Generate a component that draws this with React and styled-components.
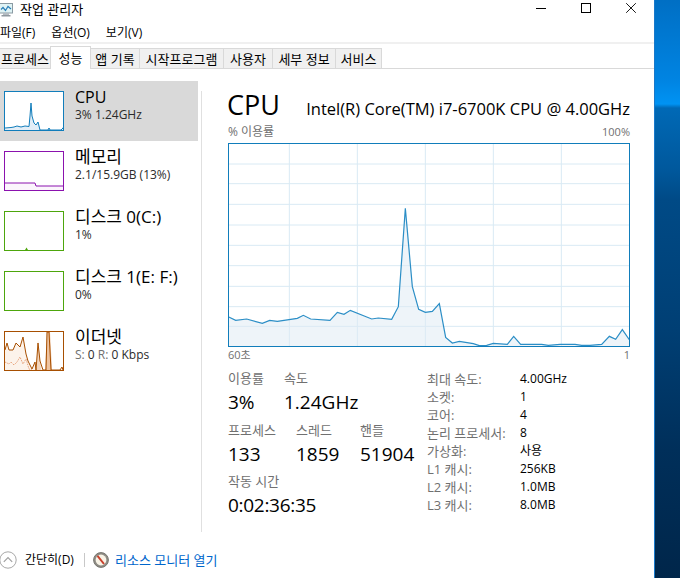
import React from "react";
import styled, { createGlobalStyle } from "styled-components";

const GlobalStyle = createGlobalStyle`
  html, body {
    margin: 0;
    padding: 0;
    background: #ffffff;
    overflow: hidden;
  }
  body {
    font-family: "Open Sans", "Noto Sans CJK KR", sans-serif;
    color: #000000;
  }
`;

const Screen = styled.div`
  display: flex;
  width: 680px;
  height: 578px;
  overflow: hidden;
`;

const Desktop = styled.div`
  flex: 1;
  background: linear-gradient(
    180deg,
    #006fc4 0,
    #0084e2 80px,
    #0093f3 104px,
    #0069b6 108px,
    #00589c 170px,
    #004a86 200px,
    #003f74 330px,
    #002f5a 450px,
    #00264a 578px
  );
`;

const Window = styled.div`
  width: 654px;
  height: 578px;
  border-right: 1px solid #1979ca;
  display: flex;
  flex-direction: column;
  background: #ffffff;
`;

const TitleBar = styled.div`
  height: 22px;
  flex-shrink: 0;
  display: flex;
  align-items: flex-start;
  justify-content: space-between;
`;

const TitleLeft = styled.div`
  display: flex;
  align-items: center;
  gap: 7px;
  font-size: 13px;
  line-height: 16px;
  height: 16px;
  margin-top: 1px;
`;

const WinButtons = styled.div`
  display: flex;
  margin-top: 3px;
  margin-right: 18px;
  gap: 35px;
  align-items: center;
`;

const MenuBar = styled.div`
  height: 18px;
  flex-shrink: 0;
  display: flex;
  gap: 16px;
  align-items: center;
  font-size: 12px;
  line-height: 16px;
  border-bottom: 2px solid #f0f0f0;
  padding-top: 2px;
`;

const TabBar = styled.div`
  height: 24px;
  flex-shrink: 0;
  display: flex;
  align-items: flex-end;
  border-bottom: 1px solid #d9d9d9;
`;

const Tab = styled.div`
  width: ${(p) => p.$w}px;
  box-sizing: border-box;
  height: ${(p) => (p.$active ? 23 : 20)}px;
  margin-bottom: ${(p) => (p.$active ? -1 : 0)}px;
  display: flex;
  align-items: center;
  justify-content: center;
  font-size: 13px;
  line-height: 16px;
  white-space: nowrap;
  background: ${(p) => (p.$active ? "#ffffff" : "#f0f0f0")};
  border: 1px solid #d9d9d9;
  border-left-width: ${(p) => (p.$first ? 0 : 1)}px;
  border-bottom-width: 0;
  margin-right: -1px;
  position: relative;
  z-index: ${(p) => (p.$active ? 1 : 0)};
`;

const Main = styled.div`
  flex: 1;
  display: flex;
  padding-top: 12px;
  min-height: 0;
`;

const Sidebar = styled.div`
  width: 198px;
  flex-shrink: 0;
  display: flex;
  flex-direction: column;
`;

const SideRow = styled.div`
  height: 60px;
  flex-shrink: 0;
  display: flex;
  align-items: center;
  padding-left: 4px;
  gap: 11px;
  background: ${(p) => (p.$selected ? "#d9d9d9" : "transparent")};
`;

const Thumb = styled.svg`
  width: 60px;
  height: 40px;
  box-sizing: border-box;
  border: 1px solid ${(p) => p.$color};
  background: #ffffff;
  flex-shrink: 0;
`;

const SideText = styled.div`
  display: flex;
  flex-direction: column;
  align-self: flex-start;
  padding-top: 6px;
`;

const SideName = styled.div`
  font-size: ${(p) => p.$size || 17}px;
  line-height: 20px;
  white-space: nowrap;
`;

const SideSub = styled.div`
  font-size: 12px;
  line-height: 16px;
  white-space: nowrap;
  color: #2b2b2b;
`;

const SubDim = styled.span`
  color: #707070;
`;

const Divider = styled.div`
  width: 1px;
  height: 441px;
  margin: 10px 0 0 3px;
  background: #e0e0e0;
  flex-shrink: 0;
`;

const Panel = styled.div`
  width: 402px;
  margin-left: 26px;
  flex-shrink: 0;
  display: flex;
  flex-direction: column;
`;

const Heading = styled.div`
  display: flex;
  align-items: baseline;
  justify-content: space-between;
  height: 34px;
  margin-top: 6px;
`;

const HeadTitle = styled.div`
  font-size: 27px;
  line-height: 36px;
  margin-left: -1px;
`;

const HeadCpu = styled.div`
  font-size: 16.5px;
  line-height: 36px;
  white-space: nowrap;
`;

const AxisRow = styled.div`
  display: flex;
  justify-content: space-between;
  font-size: 11px;
  line-height: 14px;
  color: #707070;
  height: ${(p) => p.$h}px;
  align-items: center;
`;

const AxisTitle = styled.span`
  font-size: 12px;
`;

const Chart = styled.svg`
  display: block;
  width: 402px;
  height: 204px;
  flex-shrink: 0;
  box-sizing: border-box;
  border: 1px solid #117dbb;
  background: #ffffff;
`;

const Stats = styled.div`
  display: grid;
  grid-template-columns: 199px 1fr;
  margin-top: 7px;
`;

const StatsLeft = styled.div`
  display: flex;
  flex-direction: column;
`;

const StatLine = styled.div`
  display: flex;
  height: ${(p) => p.$h}px;
`;

const Stat = styled.div`
  width: ${(p) => p.$w}px;
  flex-shrink: 0;
  display: flex;
  flex-direction: column;
  white-space: nowrap;
`;

const StatLabel = styled.div`
  font-size: 13px;
  line-height: 16px;
  color: #707070;
`;

const StatValue = styled.div`
  font-size: 19px;
  line-height: 26px;
  margin-top: 3px;
  letter-spacing: ${(p) => (p.$tight ? "-0.3px" : "0")};
`;

const Details = styled.div`
  display: grid;
  grid-template-columns: 93px 1fr;
  grid-auto-rows: 18px;
  font-size: 12px;
  line-height: 18px;
  white-space: nowrap;
`;

const DetailKey = styled.div`
  color: #707070;
  font-size: 13px;
`;

const Footer = styled.div`
  height: 32px;
  flex-shrink: 0;
  display: flex;
  align-items: center;
  font-size: 12px;
  line-height: 16px;
  margin-bottom: 2px;
`;

const FooterLabel = styled.span`
  margin-left: 8px;
  width: 59px;
  white-space: nowrap;
`;

const FooterRule = styled.div`
  width: 1px;
  height: 14px;
  background: #c8c8c8;
  margin-right: 8px;
`;

const FooterLink = styled.span`
  color: #0066cc;
  font-size: 13px;
  margin-left: 6px;
  white-space: nowrap;
`;

// chart trace, traced from the graph (viewBox units are 1/3 px)
const CPU_TRACE = [
  [24, 380], [47, 391], [80, 387], [127, 400], [149, 391], [172, 394], [232, 385],
  [250, 376], [272, 387], [330, 391], [352, 367], [372, 373], [391, 361], [455, 387],
  [475, 384], [515, 388], [535, 350], [556, 55], [577, 290], [596, 358], [616, 367],
  [637, 364], [658, 341], [677, 442], [697, 459], [718, 454], [760, 461], [778, 467],
  [800, 466], [820, 460], [862, 463], [881, 439], [902, 463], [965, 463], [985, 466],
  [1020, 463], [1065, 463], [1085, 466], [1110, 466], [1145, 463], [1168, 439],
  [1187, 448], [1207, 419], [1230, 452],
];
const H_LINES = [-78, -19, 43, 105, 166, 227, 289, 350, 409];
const V_LINES = [208, 412, 616, 820, 1024];

const pts = (list) => list.map((p) => p.join(",")).join(" ");

function CpuChart() {
  const area = pts([[24, 471], ...CPU_TRACE, [1230, 471]]);
  return (
    <Chart viewBox="27 -138 1200 606" preserveAspectRatio="none">
      {H_LINES.map((y) => (
        <line key={y} x1="0" x2="1240" y1={y} y2={y} stroke="#d9eaf4" strokeWidth="1" vectorEffect="non-scaling-stroke" />
      ))}
      {V_LINES.map((x) => (
        <line key={x} x1={x} x2={x} y1="-150" y2="480" stroke="#d9eaf4" strokeWidth="1" vectorEffect="non-scaling-stroke" />
      ))}
      <polygon points={area} fill="#deeaf4" fillOpacity="0.5" />
      <polyline points={pts(CPU_TRACE)} fill="none" stroke="#2b8ec6" strokeWidth="1.2" vectorEffect="non-scaling-stroke" />
    </Chart>
  );
}

function CpuThumb() {
  const line = [[0, 36], [6, 35.5], [9, 35], [12, 34], [16, 35], [20, 34], [24, 34.5], [25, 24], [26, 11], [27, 24], [29, 31], [31, 33], [33, 30], [35, 38], [43, 38], [44, 36], [45, 38], [56, 38], [58, 36], [60, 33]];
  return (
    <Thumb $color="#117dbb" viewBox="0 0 58 38" preserveAspectRatio="none">
      <polygon points={pts([[0, 38], ...line, [60, 38]])} fill="#d7e7f3" fillOpacity="0.7" />
      <polyline points={pts(line)} fill="none" stroke="#117dbb" strokeWidth="1" />
    </Thumb>
  );
}

function MemoryThumb() {
  const line = [[0, 31], [30, 31], [31, 34], [58, 34]];
  return (
    <Thumb $color="#8b12ae" viewBox="0 0 58 38" preserveAspectRatio="none">
      <polygon points={pts([[0, 38], ...line, [58, 38]])} fill="#fbf5fc" />
      <polyline points={pts(line)} fill="none" stroke="#8b12ae" strokeWidth="1" />
    </Thumb>
  );
}

function DiskThumb({ tick }) {
  return (
    <Thumb $color="#4da60c" viewBox="0 0 58 38" preserveAspectRatio="none">
      {tick && <polygon points="20,38 21.5,35.5 23,38" fill="#4da60c" />}
    </Thumb>
  );
}

function EthernetThumb() {
  const dark = [[0, 18], [2, 11], [4, 18], [8, 18], [11, 11], [15, 15], [18, 5], [21, 22], [23, 29], [27, 37], [30, 30], [31, 38], [33, 11], [35, 29], [38, 38], [41, 38], [42, 0], [44, 0], [46, 38], [55, 38], [57, 35], [58, 38]];
  const dotted = [[0, 30], [4, 32], [6, 30], [9, 33], [12, 30], [15, 25], [18, 32], [21, 27], [24, 37], [27, 38]];
  return (
    <Thumb $color="#a74f01" viewBox="0 0 58 38" preserveAspectRatio="none">
      <polygon points={pts([[0, 38], ...dark, [58, 38]])} fill="#fcf3eb" />
      <polygon points="31,38 33,8 36,38" fill="#f3d5bc" />
      <polygon points="40,38 42,0 45,0 47,38" fill="#eec3a0" />
      <polyline points={pts(dotted)} fill="none" stroke="#e8a27a" strokeWidth="1" strokeDasharray="1.5 1" />
      <polyline points={pts(dark)} fill="none" stroke="#a74f01" strokeWidth="1" />
    </Thumb>
  );
}

function AppIcon() {
  return (
    <svg width="14" height="14" viewBox="0 0 14 14" style={{ marginLeft: -1, marginTop: 2 }}>
      <rect x="0.5" y="0.5" width="13" height="9.5" fill="#dff3f5" stroke="#8a9aa3" />
      <polyline points="2,6.5 4,4.5 6.5,7.5 9,3.5 12,6" fill="none" stroke="#2a7fb8" strokeWidth="1.2" />
      <rect x="4" y="10" width="6" height="2" fill="#b5bcc2" />
      <rect x="2.5" y="12" width="9" height="1.5" fill="#8f989f" />
    </svg>
  );
}

function MinIcon() {
  return (
    <svg width="10" height="10" viewBox="0 0 10 10">
      <line x1="0" x2="10" y1="5.5" y2="5.5" stroke="#000" />
    </svg>
  );
}

function MaxIcon() {
  return (
    <svg width="10" height="10" viewBox="0 0 10 10">
      <rect x="0.5" y="0.5" width="9" height="9" fill="none" stroke="#000" />
    </svg>
  );
}

function CloseIcon() {
  return (
    <svg width="10" height="10" viewBox="0 0 10 10">
      <path d="M0.2 0.2 L9.8 9.8 M9.8 0.2 L0.2 9.8" fill="none" stroke="#000" strokeWidth="0.9" />
    </svg>
  );
}

function ChevronCircle() {
  return (
    <svg width="18" height="18" viewBox="0 0 18 18" style={{ marginLeft: -1 }}>
      <circle cx="9" cy="9" r="8.2" fill="#ffffff" stroke="#a8a8a8" />
      <polyline points="4.8,10.8 9,6.6 13.2,10.8" fill="none" stroke="#a0a0a0" strokeWidth="1.2" />
    </svg>
  );
}

function MonitorIcon() {
  return (
    <svg width="16" height="16" viewBox="0 0 16 16">
      <circle cx="8" cy="8" r="7.4" fill="#8f8d86" stroke="#77756f" />
      <circle cx="8" cy="8" r="5.4" fill="#f8f3e6" />
      <line x1="4.5" y1="3.8" x2="11" y2="12" stroke="#c9402c" strokeWidth="2" />
    </svg>
  );
}

const TABS = [
  { label: "프로세스", w: 51, first: true },
  { label: "성능", w: 41, active: true },
  { label: "앱 기록", w: 50 },
  { label: "시작프로그램", w: 85 },
  { label: "사용자", w: 50 },
  { label: "세부 정보", w: 64 },
  { label: "서비스", w: 47 },
];

const DETAILS = [
  ["최대 속도:", "4.00GHz"],
  ["소켓:", "1"],
  ["코어:", "4"],
  ["논리 프로세서:", "8"],
  ["가상화:", "사용"],
  ["L1 캐시:", "256KB"],
  ["L2 캐시:", "1.0MB"],
  ["L3 캐시:", "8.0MB"],
];

export default function App() {
  return (
    <Screen>
      <GlobalStyle />
      <Window>
        <TitleBar>
          <TitleLeft>
            <AppIcon />
            <span>작업 관리자</span>
          </TitleLeft>
          <WinButtons>
            <MinIcon />
            <MaxIcon />
            <CloseIcon />
          </WinButtons>
        </TitleBar>
        <MenuBar>
          <span>파일(F)</span>
          <span>옵션(O)</span>
          <span>보기(V)</span>
        </MenuBar>
        <TabBar>
          {TABS.map((t) => (
            <Tab key={t.label} $w={t.w} $active={t.active} $first={t.first}>
              {t.label}
            </Tab>
          ))}
        </TabBar>
        <Main>
          <Sidebar>
            <SideRow $selected>
              <CpuThumb />
              <SideText>
                <SideName $size={16}>CPU</SideName>
                <SideSub>3% 1.24GHz</SideSub>
              </SideText>
            </SideRow>
            <SideRow>
              <MemoryThumb />
              <SideText>
                <SideName>메모리</SideName>
                <SideSub>2.1/15.9GB (13%)</SideSub>
              </SideText>
            </SideRow>
            <SideRow>
              <DiskThumb tick />
              <SideText>
                <SideName>디스크 0(C:)</SideName>
                <SideSub>1%</SideSub>
              </SideText>
            </SideRow>
            <SideRow>
              <DiskThumb />
              <SideText>
                <SideName>디스크 1(E: F:)</SideName>
                <SideSub>0%</SideSub>
              </SideText>
            </SideRow>
            <SideRow>
              <EthernetThumb />
              <SideText>
                <SideName>이더넷</SideName>
                <SideSub>
                  <SubDim>S:</SubDim> 0 <SubDim>R:</SubDim> 0 Kbps
                </SideSub>
              </SideText>
            </SideRow>
          </Sidebar>
          <Divider />
          <Panel>
            <Heading>
              <HeadTitle>CPU</HeadTitle>
              <HeadCpu>Intel(R) Core(TM) i7-6700K CPU @ 4.00GHz</HeadCpu>
            </Heading>
            <AxisRow $h={22}>
              <AxisTitle>% 이용률</AxisTitle>
              <span>100%</span>
            </AxisRow>
            <CpuChart />
            <AxisRow $h={16}>
              <span>60초</span>
              <span>1</span>
            </AxisRow>
            <Stats>
              <StatsLeft>
                <StatLine $h={52}>
                  <Stat $w={56}>
                    <StatLabel>이용률</StatLabel>
                    <StatValue>3%</StatValue>
                  </Stat>
                  <Stat $w={100}>
                    <StatLabel>속도</StatLabel>
                    <StatValue>1.24GHz</StatValue>
                  </Stat>
                </StatLine>
                <StatLine $h={51}>
                  <Stat $w={68}>
                    <StatLabel>프로세스</StatLabel>
                    <StatValue>133</StatValue>
                  </Stat>
                  <Stat $w={64}>
                    <StatLabel>스레드</StatLabel>
                    <StatValue>1859</StatValue>
                  </Stat>
                  <Stat $w={60}>
                    <StatLabel>핸들</StatLabel>
                    <StatValue>51904</StatValue>
                  </Stat>
                </StatLine>
                <StatLine $h={50}>
                  <Stat $w={120}>
                    <StatLabel>작동 시간</StatLabel>
                    <StatValue $tight>0:02:36:35</StatValue>
                  </Stat>
                </StatLine>
              </StatsLeft>
              <Details>
                {DETAILS.map(([k, v]) => (
                  <React.Fragment key={k}>
                    <DetailKey>{k}</DetailKey>
                    <div>{v}</div>
                  </React.Fragment>
                ))}
              </Details>
            </Stats>
          </Panel>
        </Main>
        <Footer>
          <ChevronCircle />
          <FooterLabel>간단히(D)</FooterLabel>
          <FooterRule />
          <MonitorIcon />
          <FooterLink>리소스 모니터 열기</FooterLink>
        </Footer>
      </Window>
      <Desktop />
    </Screen>
  );
}
